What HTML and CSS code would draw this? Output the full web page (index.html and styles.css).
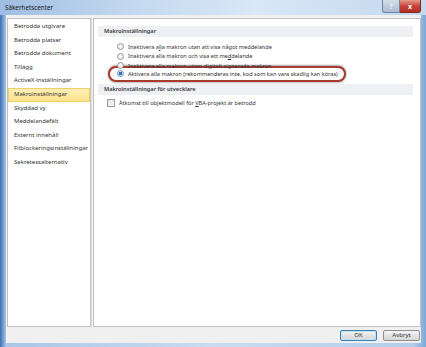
FILE: index.html
```html
<!DOCTYPE html>
<html lang="sv">
<head>
    <meta charset="UTF-8">
    <title>Säkerhetscenter</title>
    <link rel="stylesheet" href="styles.css">
</head>
<body>
    <div class="window">
        <div class="titlebar">
            <span class="title">Säkerhetscenter</span>
            <div class="caption">
                <span class="cap-btn help">?</span>
                <span class="cap-btn close">x</span>
            </div>
        </div>
        <div class="client">
            <div class="panes">
                <ul class="nav">
                    <li>Betrodda utgivare</li>
                    <li>Betrodda platser</li>
                    <li>Betrodda dokument</li>
                    <li>Tillägg</li>
                    <li>ActiveX-inställningar</li>
                    <li class="selected">Makroinställningar</li>
                    <li>Skyddad vy</li>
                    <li>Meddelandefält</li>
                    <li>Externt innehåll</li>
                    <li>Filblockeringsinställningar</li>
                    <li>Sekretessalternativ</li>
                </ul>
                <div class="content">
                    <div class="section-head">Makroinställningar</div>
                    <div class="options">
                        <div class="option"><span class="radio"></span><span>Inaktivera a<u>l</u>la makron utan att visa något meddelande</span></div>
                        <div class="option"><span class="radio"></span><span>Inaktivera alla makron och visa ett me<u>d</u>delande</span></div>
                        <div class="option"><span class="radio"></span><span>Inaktivera alla makron utom digitalt signerade makron</span></div>
                        <div class="option marked"><span class="radio checked"></span><span>Aktivera alla makron (rekommenderas inte, kod som kan vara skadlig kan köras)</span></div>
                    </div>
                    <div class="section-head">Makroinställningar för utvecklare</div>
                    <div class="check"><span class="box"></span><span>Åtkomst till objektmodell för <u>V</u>BA-projekt är betrodd</span></div>
                </div>
            </div>
            <div class="footer">
                <button class="default">OK</button>
                <button>Avbryt</button>
            </div>
        </div>
    </div>
</body>
</html>
```

FILE: styles.css
```css
html, body {
    margin: 0;
    padding: 0;
}
body {
    width: 426px;
    height: 347px;
    overflow: hidden;
    font-family: 'Noto Sans', sans-serif;
    font-size: 6px;
    color: #2b2b2b;
}
.window {
    width: 426px;
    height: 347px;
    box-sizing: border-box;
    display: flex;
    flex-direction: column;
    background: linear-gradient(to right, #3f6fae 0, #6f9bd1 3px, #a9c6e8 6px, #c9dcf1 50%, #b3cdea 97%, #7ea7d8 100%);
    padding: 0 5px 4px 6px;
}
.titlebar {
    height: 15px;
    display: flex;
    align-items: flex-start;
    justify-content: space-between;
    margin: 0 -5px 0 -6px;
    padding: 0 5px 0 5px;
    background: linear-gradient(to right, #9fbde3 0, #c3d8ef 30%, #d9e7f6 60%, #c4d8ef 100%);
}
.title {
    font-size: 6.3px;
    line-height: 15px;
    color: #1a1a1a;
}
.caption {
    display: flex;
}
.cap-btn {
    height: 12px;
    display: flex;
    align-items: center;
    justify-content: center;
    font-size: 7px;
    font-weight: bold;
    color: #fff;
    border: 1px solid #6d86a8;
    border-top: none;
}
.help {
    width: 16px;
    background: linear-gradient(#d3dde9, #aebdd0);
    color: #eef2f7;
    border-radius: 0 0 0 3px;
}
.close {
    width: 20px;
    background: linear-gradient(#e39a8a, #c7443a 50%, #b92d22);
    border-color: #7d2a22;
    border-left: none;
    border-radius: 0 0 3px 0;
}
.client {
    flex: 1;
    display: flex;
    flex-direction: column;
    background: #f0f0f0;
    padding: 3px 0 0 1px;
}
.panes {
    flex: 1;
    display: flex;
    gap: 2px;
}
.nav {
    list-style: none;
    margin: 0;
    padding: 1px 0 0 0;
    width: 82px;
    background: #fff;
    border: 1px solid #c2c2c2;
    box-shadow: 1px 0 0 #e2e2e2;
}
.nav li {
    height: 13.6px;
    line-height: 13.6px;
    padding-left: 6px;
    white-space: nowrap;
    color: #333;
}
.nav li.selected {
    background: linear-gradient(#fff0b8, #ffe28c);
    box-shadow: inset 0 0 0 1px #f0cf6a;
}
.content {
    flex: 1;
    background: #fff;
    border: 1px solid #c2c2c2;
    padding: 7px 7px 0 4px;
    font-size: 5.6px;
}
.section-head {
    height: 11px;
    line-height: 11px;
    padding-left: 6px;
    background: #eef0f4;
    font-weight: 600;
    color: #3a3a3a;
}
.options {
    padding: 5px 0 2px 10px;
}
.option {
    display: flex;
    align-items: center;
    height: 9.6px;
    padding-left: 9px;
    white-space: nowrap;
    color: #333;
}
.option .radio {
    flex-shrink: 0;
    width: 5px;
    height: 5px;
    border-radius: 50%;
    border: 1px solid #9a9a9a;
    background: radial-gradient(#ffffff, #dcdcdc);
    margin-right: 4px;
}
.option .radio.checked {
    background: radial-gradient(#3c7fd0 0, #2d68b7 40%, #e8eef7 60%);
    border-color: #6b8fbf;
}
.option.marked {
    width: 227px;
    height: 12px;
    margin-top: -5px;
    padding-left: 7px;
    background: #fff;
    border: 2px solid #a93a2e;
    border-radius: 9px;
    box-shadow: 0 -1px 2px rgba(0, 0, 0, 0.35), 0 1px 2px rgba(0, 0, 0, 0.25);
}
.check {
    display: flex;
    align-items: center;
    height: 9px;
    margin: 4px 0 0 9px;
    white-space: nowrap;
    color: #333;
}
.check .box {
    flex-shrink: 0;
    width: 6px;
    height: 6px;
    border: 1px solid #9a9a9a;
    background: linear-gradient(135deg, #e4e4e4, #fafafa);
    margin-right: 4px;
}
.footer {
    height: 16px;
    display: flex;
    align-items: center;
    justify-content: flex-end;
    gap: 6px;
    padding: 0 1px 0 0;
}
button {
    width: 37px;
    height: 11px;
    padding: 0;
    font-family: 'Noto Sans', sans-serif;
    font-size: 6px;
    color: #333;
    background: linear-gradient(#f6f6f6, #e3e3e3 50%, #d8d8d8);
    border: 1px solid #8e8f8f;
    border-radius: 2px;
}
button.default {
    border-color: #3c7fb1;
    box-shadow: inset 0 0 0 1px #bfe3f8;
}
```
